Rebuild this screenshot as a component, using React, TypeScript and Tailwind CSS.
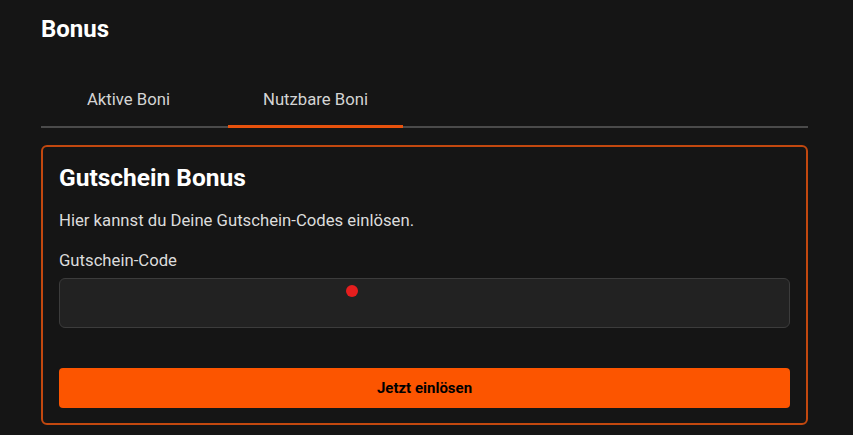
import React from 'react';

const App: React.FC = () => {
  return (
    <div className="min-h-[435px] w-full bg-[#151515] pl-[41px] pr-[45px] pt-[14px] font-['Roboto',sans-serif] text-white">
      <h1 className="text-[24px] font-bold leading-[30px]">Bonus</h1>

      <div className="mt-[44px] flex gap-[12px] border-b-2 border-[#4a4a4a]">
        <button className="-mb-[2px] w-[175px] pb-[16px] text-[16.7px] leading-[24px] text-[#d4d4d4]">
          Aktive Boni
        </button>
        <button className="-mb-[2px] w-[175px] border-b-[3px] border-[#e8520d] pb-[13px] text-[16.7px] leading-[24px] text-[#d4d4d4]">
          Nutzbare Boni
        </button>
      </div>

      <div className="mt-[17px] rounded-[6px] border-2 border-[#c2480f] px-[16px] pt-[15px] pb-[15px]">
        <h2 className="text-[24.5px] font-bold leading-[32px]">Gutschein Bonus</h2>
        <p className="mt-[15px] text-[16.7px] leading-[24px] text-[#dcdcdc]">
          Hier kannst du Deine Gutschein-Codes einlösen.
        </p>
        <label className="mt-[16px] block text-[16.7px] leading-[24px] text-[#dcdcdc]">Gutschein-Code</label>
        <div className="relative mt-[5px] h-[50px] rounded-[6px] border border-[#3c3c3c] bg-[#222222]">
          <span className="absolute left-[286px] top-[6px] h-[12px] w-[12px] rounded-full bg-[#e61e1e]" />
        </div>
        <button className="mt-[40px] flex h-[40px] w-full items-center justify-center rounded-[4px] bg-[#fc5500] text-[15px] font-bold text-black">
          Jetzt einlösen
        </button>
      </div>
    </div>
  );
};

export default App;
